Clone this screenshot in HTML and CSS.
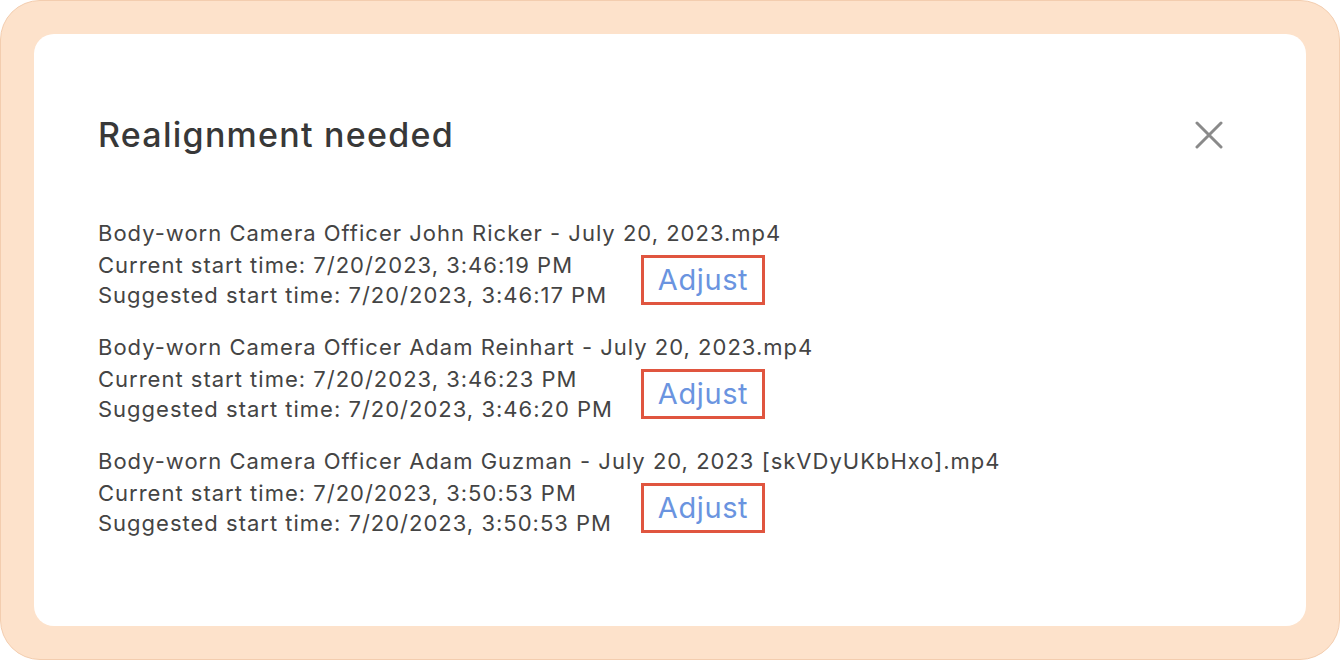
FILE: index.html
```html
<!DOCTYPE html>
<html>
<head>
<meta charset="utf-8">
<link rel="stylesheet" href="styles.css">
</head>
<body>
<div class="frame">
  <div class="card">
    <div class="header">
      <h1 class="title">Realignment needed</h1>
      <button class="close" aria-label="Close">
        <svg width="28" height="28" viewBox="0 0 28 28"><path d="M2 2 L26 26 M26 2 L2 26" stroke="#8a8a8a" stroke-width="3" stroke-linecap="round" fill="none"/></svg>
      </button>
    </div>
    <div class="list">
      <div class="item">
        <div class="file">Body-worn Camera Officer John Ricker - July 20, 2023.mp4</div>
        <div class="row">
          <div class="times">
            <div>Current start time: 7/20/2023, 3:46:19 PM</div>
            <div>Suggested start time: 7/20/2023, 3:46:17 PM</div>
          </div>
          <button class="adjust">Adjust</button>
        </div>
      </div>
      <div class="item">
        <div class="file">Body-worn Camera Officer Adam Reinhart - July 20, 2023.mp4</div>
        <div class="row">
          <div class="times">
            <div>Current start time: 7/20/2023, 3:46:23 PM</div>
            <div>Suggested start time: 7/20/2023, 3:46:20 PM</div>
          </div>
          <button class="adjust">Adjust</button>
        </div>
      </div>
      <div class="item">
        <div class="file">Body-worn Camera Officer Adam Guzman - July 20, 2023 [skVDyUKbHxo].mp4</div>
        <div class="row">
          <div class="times">
            <div>Current start time: 7/20/2023, 3:50:53 PM</div>
            <div>Suggested start time: 7/20/2023, 3:50:53 PM</div>
          </div>
          <button class="adjust">Adjust</button>
        </div>
      </div>
    </div>
  </div>
</div>
</body>
</html>
```
FILE: styles.css
```css
* { box-sizing: border-box; }
html, body { margin: 0; padding: 0; background: #ffffff; }
body { font-family: Inter, "Noto Sans", sans-serif; }
.frame {
  width: 1340px;
  height: 660px;
  background: #fde2cb;
  border: 1px solid #f3cdaf;
  border-radius: 40px;
  padding: 33px;
}
.card {
  width: 100%;
  height: 100%;
  background: #ffffff;
  border-radius: 20px;
  padding: 80px 83px 0 64px;
}
.header {
  display: flex;
  justify-content: space-between;
  align-items: center;
}
.title {
  margin: 0;
  font-size: 34px;
  font-weight: 500;
  color: #383838;
  line-height: 42px;
  letter-spacing: 1.25px;
}
.close {
  border: 0;
  background: none;
  padding: 0;
  width: 28px;
  height: 28px;
  display: flex;
  cursor: pointer;
}
.list {
  margin-top: 62px;
  display: flex;
  flex-direction: column;
  gap: 22px;
}
.item {
  font-size: 22px;
  color: #444444;
  line-height: 30px;
  letter-spacing: 1px;
}
.file { margin-bottom: 2px; }
.row {
  display: flex;
  align-items: center;
}
.times { width: 543px; flex: none; }
.adjust {
  width: 124px;
  height: 50px;
  border: 3px solid #e0553f;
  background: #ffffff;
  color: #6a94e0;
  font-family: Inter, "Noto Sans", sans-serif;
  font-size: 29px;
  font-weight: 400;
  letter-spacing: 0.6px;
  padding: 0 0 2px;
  text-align: center;
  cursor: pointer;
}
```
